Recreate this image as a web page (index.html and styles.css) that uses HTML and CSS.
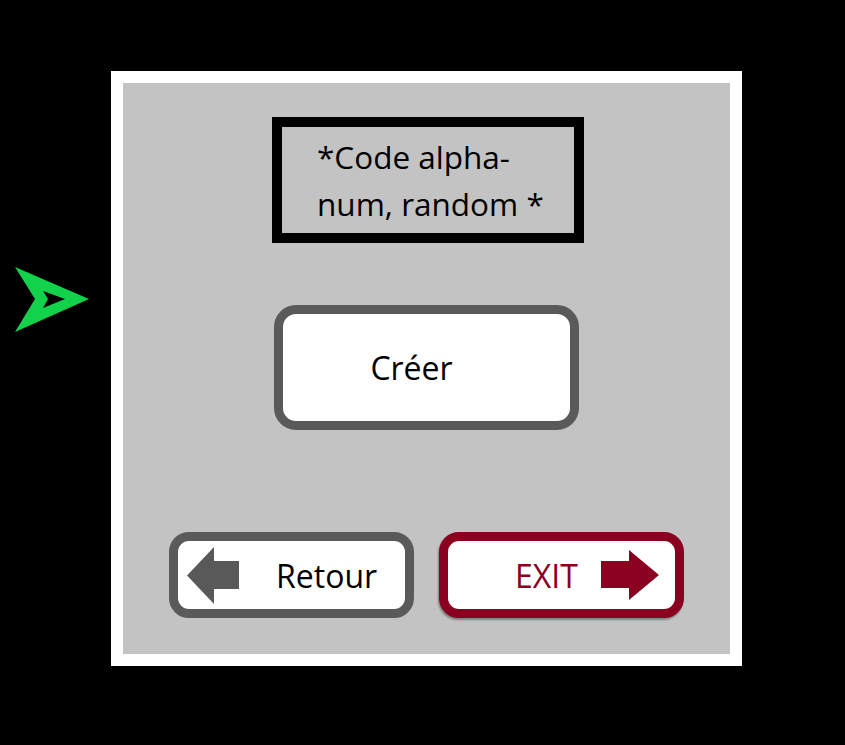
FILE: index.html
```html
<!DOCTYPE html>
<html lang="fr">
<head>
<meta charset="utf-8">
<title>Créer</title>
<link rel="stylesheet" href="styles.css">
</head>
<body>
<div class="stage">
  <svg class="pointer" width="76" height="66" viewBox="0 0 76 66" aria-hidden="true">
    <path fill="#12d14b" fill-rule="evenodd" d="M0 0 L74 32 L0 65 L20 32 Z M28 24 L33 32 L28 41 L50 32 Z"/>
  </svg>
  <div class="frame">
    <div class="code-box">*Code alpha-<br>num, random *</div>
    <button class="create-btn">Créer</button>
    <div class="nav-row">
      <button class="nav-btn back">
        <svg width="52" height="57" viewBox="0 0 52 57" aria-hidden="true"><path fill="#595959" d="M0 28.5 L27 0 L27 14 L52 14 L52 42 L27 42 L27 57 Z"/></svg>
        <span>Retour</span>
      </button>
      <button class="nav-btn exit">
        <span>EXIT</span>
        <svg width="58" height="50" viewBox="0 0 58 50" aria-hidden="true"><path fill="#8a0020" d="M58 25 L28 0 L28 11 L0 11 L0 38 L28 38 L28 50 Z"/></svg>
      </button>
    </div>
  </div>
</div>
</body>
</html>
```
FILE: styles.css
```css
html, body {
  margin: 0;
  padding: 0;
  background: #000;
}
.stage {
  position: relative;
  width: 845px;
  height: 745px;
  background: #000;
  padding: 71px 0 0 111px;
  box-sizing: border-box;
  font-family: "Open Sans", "Noto Sans", sans-serif;
}
.pointer {
  position: absolute;
  left: 15px;
  top: 267px;
}
.frame {
  width: 631px;
  height: 595px;
  box-sizing: border-box;
  border: 12px solid #fff;
  background: #c3c3c3;
  display: flex;
  flex-direction: column;
  align-items: center;
}
.code-box {
  margin-top: 34px;
  margin-left: 3px;
  width: 312px;
  height: 126px;
  box-sizing: border-box;
  border: 10px solid #000;
  padding: 6px 0 0 35px;
  font-size: 31.5px;
  line-height: 47px;
  color: #000;
  white-space: nowrap;
}
.create-btn {
  margin-top: 62px;
  width: 305px;
  height: 125px;
  box-sizing: border-box;
  border: 9px solid #5a5a5a;
  border-radius: 22px;
  background: #fff;
  font-family: inherit;
  font-size: 32px;
  color: #000;
  padding: 0 30px 0 0;
  display: flex;
  align-items: center;
  justify-content: center;
}
.nav-row {
  margin-top: 102px;
  display: flex;
  gap: 25px;
}
.nav-btn {
  width: 245px;
  height: 86px;
  box-sizing: border-box;
  border: 9px solid;
  border-radius: 20px;
  background: #fff;
  font-family: inherit;
  font-size: 32px;
  display: flex;
  align-items: center;
  margin: 0;
  white-space: nowrap;
}
.nav-btn.back {
  border-color: #5a5a5a;
  color: #000;
  padding: 0 0 0 9px;
  gap: 37px;
}
.nav-btn.exit {
  border-color: #8a0020;
  color: #8a0020;
  padding: 0 0 0 67px;
  gap: 23px;
  box-shadow: -1px 2px 2px rgba(0, 0, 0, 0.35);
}
.nav-btn svg {
  display: block;
  flex: none;
}
```
